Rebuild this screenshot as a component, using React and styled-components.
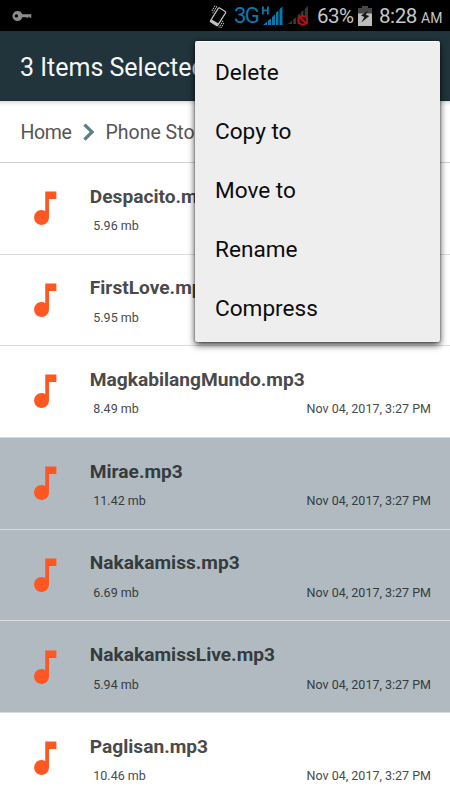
import React from 'react';
import styled, { createGlobalStyle } from 'styled-components';

const GlobalStyle = createGlobalStyle`
  * {
    box-sizing: border-box;
  }
  body {
    margin: 0;
    overflow: hidden;
    background: #fff;
    font-family: Roboto, "Liberation Sans", sans-serif;
  }
`;

const Screen = styled.div`
  position: relative;
  width: 450px;
  height: 800px;
  overflow: hidden;
  background: #fff;
`;

const StatusBar = styled.div`
  display: flex;
  align-items: center;
  height: 31px;
  padding: 0 8px 0 12px;
  background: #000;
  color: #c6c6c6;
`;

const StatusIcon = styled.svg`
  flex: none;
  display: block;
  margin-left: ${props => props.$gap || 0}px;
`;

const StatusText = styled.span`
  flex: none;
  width: ${props => props.$width}px;
  margin-left: ${props => props.$gap}px;
  padding-top: ${props => props.$drop || 0}px;
  font-size: ${props => props.$size}px;
  line-height: 31px;
  letter-spacing: ${props => props.$spacing || 0}px;
  white-space: nowrap;
  color: ${props => props.$color || 'inherit'};
`;

const Toolbar = styled.header`
  display: flex;
  align-items: center;
  height: 70px;
  padding: 3px 0 0 20px;
  background: #21333b;
  border-bottom: 1px solid #1b2d35;
`;

const Title = styled.h1`
  margin: 0;
  font-size: 25px;
  font-weight: 400;
  white-space: nowrap;
  color: #f6f7f7;
`;

const Breadcrumbs = styled.nav`
  display: flex;
  align-items: center;
  height: 62px;
  padding: 1px 0 0 20.5px;
  border-bottom: 1px solid #d2d2d2;
  background: linear-gradient(#dcdcdc, #f6f6f6 3px, #fff 6px);
`;

const Crumb = styled.span`
  width: ${props => props.$width}px;
  padding-top: 2px;
  font-size: 19.5px;
  letter-spacing: ${props => props.$spacing || 0}px;
  line-height: 26px;
  white-space: nowrap;
  color: #555;
`;

const Row = styled.li`
  display: flex;
  align-items: center;
  height: 91.7px;
  padding: 0 19px 0 22.8px;
  border-bottom: 1.5px solid #dadcdc;
  background: ${props => (props.$selected ? '#b0bac0' : '#fff')};
  color: ${props => (props.$selected ? '#363b3e' : '#4a4a4a')};
`;

const FileList = styled.ul`
  margin: 0;
  padding: 0;
  list-style: none;
`;

const FileInfo = styled.div`
  flex: 1;
  margin-left: 22.5px;
  padding-top: 2px;
`;

const FileName = styled.div`
  font-size: 19.15px;
  font-weight: 700;
  line-height: 26px;
`;

const FileMeta = styled.div`
  display: flex;
  justify-content: space-between;
  margin-top: 7.5px;
  padding-left: 3.5px;
  font-size: 12.5px;
  line-height: 18px;
`;

const Menu = styled.div`
  position: absolute;
  top: 41px;
  left: 195px;
  width: 245px;
  height: 301px;
  padding-top: 1px;
  border-top: 1px solid #fff;
  border-radius: 2px;
  background: #eee;
  box-shadow: 0 3px 7px rgba(0, 0, 0, 0.75), 0 0 2px rgba(0, 0, 0, 0.5);
`;

const MenuItem = styled.div`
  display: flex;
  align-items: center;
  height: 59.1px;
  padding-left: 20px;
  font-size: 22.6px;
  color: #0c0c0c;
`;

const files = [
  { name: 'Despacito.mp3', size: '5.96 mb' },
  { name: 'FirstLove.mp3', size: '5.95 mb' },
  { name: 'MagkabilangMundo.mp3', size: '8.49 mb', date: 'Nov 04, 2017, 3:27 PM' },
  { name: 'Mirae.mp3', size: '11.42 mb', date: 'Nov 04, 2017, 3:27 PM', selected: true },
  { name: 'Nakakamiss.mp3', size: '6.69 mb', date: 'Nov 04, 2017, 3:27 PM', selected: true },
  { name: 'NakakamissLive.mp3', size: '5.94 mb', date: 'Nov 04, 2017, 3:27 PM', selected: true },
  { name: 'Paglisan.mp3', size: '10.46 mb', date: 'Nov 04, 2017, 3:27 PM' },
];

const actions = ['Delete', 'Copy to', 'Move to', 'Rename', 'Compress'];

const KeyIcon = () => (
  <StatusIcon width="21" height="12" viewBox="0 0 21 12">
    <path
      fill="#8d8d8d"
      fillRule="evenodd"
      d="M5.7 1a5 5 0 0 1 4.6 3.3h9v3.4h-1.6v-.9h-1.2v.9h-1.8v-.5h-4.4A5 5 0 1 1 5.7 1zM4.400 4.200a1.700 1.700 0 1 0 0 3.400 1.700 1.700 0 0 0 0-3.400z"
    />
  </StatusIcon>
);

const VibrateIcon = () => (
  <StatusIcon $gap={173} width="24" height="24" viewBox="0 0 24 24">
    <g transform="translate(0 1) rotate(32 12 12)" fill="none" stroke="#c4c4c4">
      <rect x="7.6" y="3.5" width="8.6" height="16.5" rx="1" strokeWidth="1.2" />
      <path d="M8 18.600h7.800" strokeWidth="2.400" />
      <path d="M5.500 3.500v8M3.500 4v6M18.300 12.500v8M20.200 14v6" strokeWidth="1" strokeDasharray="1.5 .8" />
    </g>
  </StatusIcon>
);

const SignalIcon = () => (
  <StatusIcon width="21" height="20" viewBox="0 0 21 20">
    <g fill="#0a78ad">
      <path d="M1 19l4-3.500V19zM6 14.500l3-2V19H6zM10 11l3-2.500V19h-3zM14 6.500l2.500-2V19H14zM17.500 3L20.500.5V19h-3z" />
      <path d="M0 .5h1.800v3h3.200v-3h1.800v8H5V5.200H1.800v3.300H0z" />
    </g>
  </StatusIcon>
);

const NoSignalIcon = () => (
  <StatusIcon $gap={5} width="22" height="21" viewBox="0 0 22 21">
    <path fill="#363636" d="M0 19l4-3.500V19zM5.200 14.500l3-2.500v7h-3zM9.500 10.500l3-2.500v11h-3zM13 7l2.500-2v14H13zM16.700 4L20 1v18h-3.300z" />
    <circle cx="14.800" cy="15.200" r="4.400" fill="#2a1010" stroke="#bd1118" strokeWidth="1.700" />
    <path d="M11.800 12.200l6 6" stroke="#bd1118" strokeWidth="1.700" />
  </StatusIcon>
);

const BatteryIcon = () => (
  <StatusIcon $gap={4} width="14" height="20" viewBox="0 0 14 20">
    <path fill="#484848" d="M4 0h6v2h4v7H0V2h4z" />
    <path fill="#bdbdbd" d="M0 7.500h14V20H0z" />
    <path fill="#181818" d="M10 4.500L3 9.500l3.300 1.500-3 5.500 8-6.500-3.500-1.200z" />
  </StatusIcon>
);

const Chevron = () => (
  <svg width="35" height="34" viewBox="0 0 24 24">
    <path fill="#607d8b" d="M10 6L8.300 7.500 12.900 12l-4.600 4.500L10 18.100l6.100-6.100z" />
  </svg>
);

const MusicNote = () => (
  <svg width="44.5" height="44.5" viewBox="0 0 24 24">
    <path fill="#ff5722" d="M12 3v10.550c-.590-.340-1.270-.550-2-.550-2.210 0-4 1.790-4 4s1.790 4 4 4 4-1.790 4-4V7h4V3h-6z" />
  </svg>
);

const App = () => {
  return (
    <Screen>
      <GlobalStyle />
      <StatusBar>
        <KeyIcon />
        <VibrateIcon />
        <StatusText $gap={4} $width={28} $size={22} $spacing={-1.5} $color="#0a78ad">3G</StatusText>
        <SignalIcon />
        <NoSignalIcon />
        <StatusText $gap={7} $width={37} $size={20.5} $spacing={-0.5} $drop={2}>63%</StatusText>
        <BatteryIcon />
        <StatusText $gap={7} $width={42} $size={20.5} $spacing={-0.4} $drop={2}>8:28</StatusText>
        <StatusText $gap={0} $width={22} $size={14} $drop={6}>AM</StatusText>
      </StatusBar>

      <Toolbar>
        <Title>3 Items Selected</Title>
      </Toolbar>

      <Breadcrumbs>
        <Crumb $width={50} $spacing={-0.4}>Home</Crumb>
        <Chevron />
        <Crumb $width={88}>Phone Sto</Crumb>
      </Breadcrumbs>

      <FileList>
        {files.map(file => (
          <Row key={file.name} $selected={file.selected}>
            <MusicNote />
            <FileInfo>
              <FileName>{file.name}</FileName>
              <FileMeta>
                <span>{file.size}</span>
                {file.date && <span>{file.date}</span>}
              </FileMeta>
            </FileInfo>
          </Row>
        ))}
      </FileList>

      <Menu>
        {actions.map(action => (
          <MenuItem key={action}>{action}</MenuItem>
        ))}
      </Menu>
    </Screen>
  );
};

export default App;
